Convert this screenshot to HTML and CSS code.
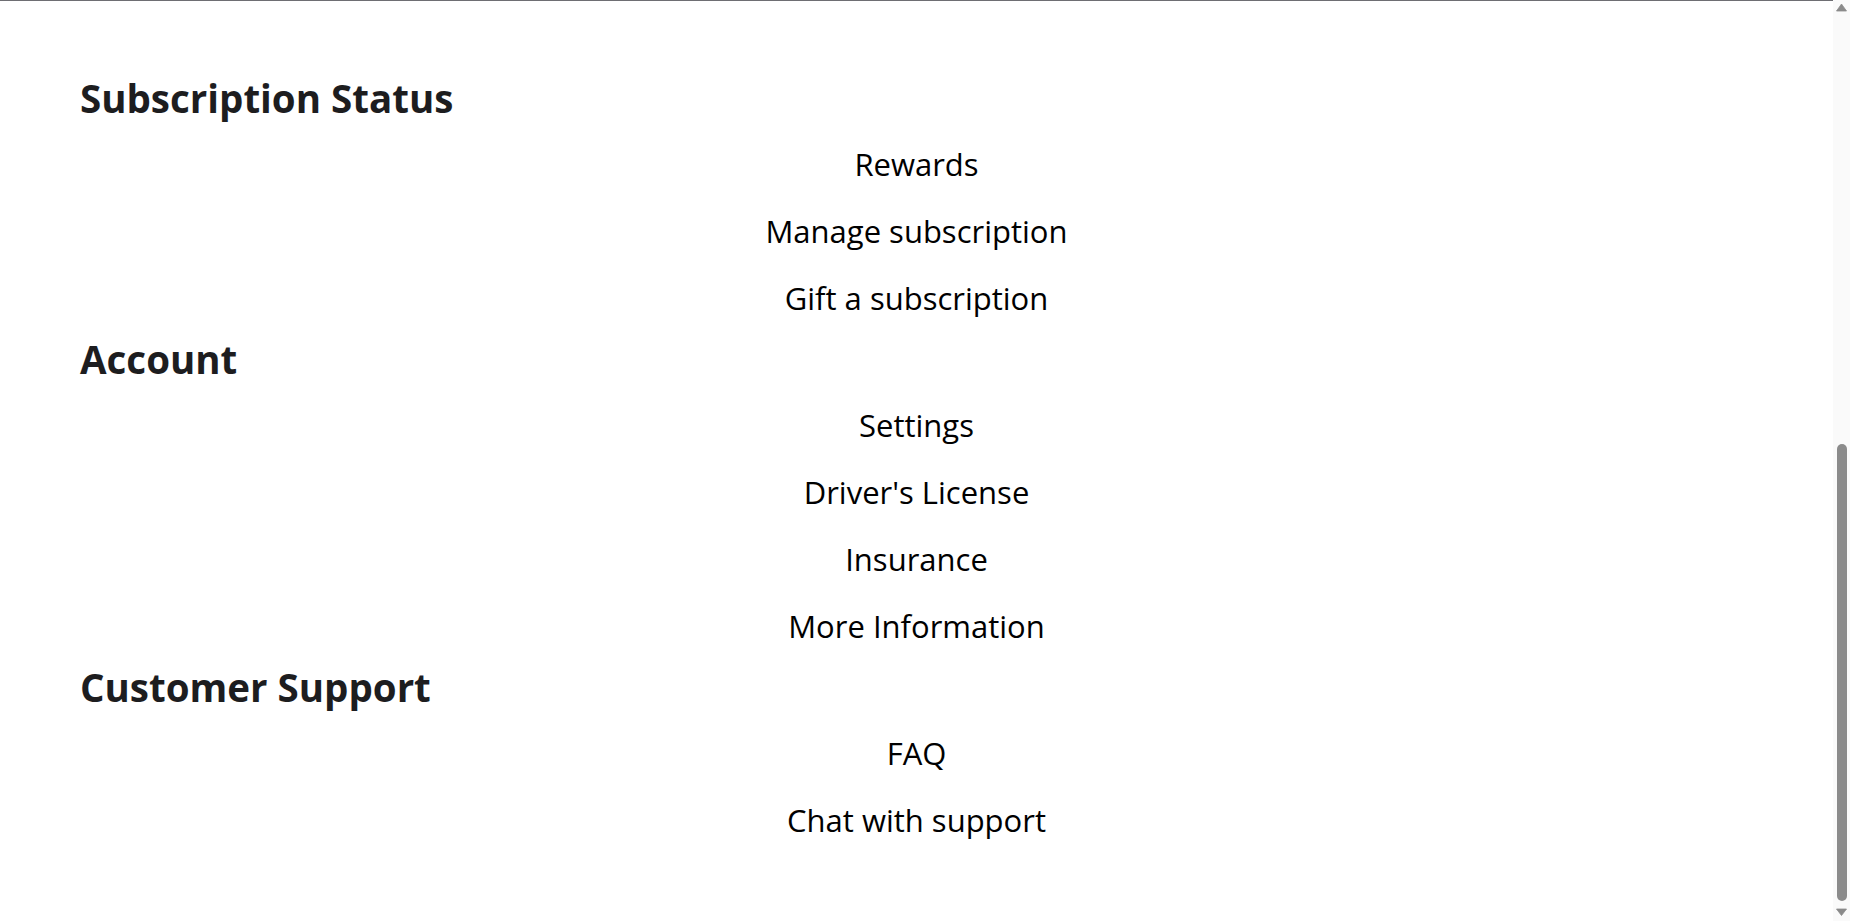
FILE: index.html
```html
<!DOCTYPE html>
<html lang="en">
<head>
<meta charset="utf-8">
<title>Profile</title>
<link rel="stylesheet" href="styles.css">
</head>
<body>
<div class="app">
  <div class="scroller">
    <div class="page">
      <header class="profile-top"></header>
      <main class="menu">
        <section class="group">
          <h2 class="group-title">Subscription Status</h2>
          <ul class="links">
            <li><a class="link" href="#">Rewards</a></li>
            <li><a class="link" href="#">Manage subscription</a></li>
            <li><a class="link" href="#">Gift a subscription</a></li>
          </ul>
        </section>
        <section class="group">
          <h2 class="group-title">Account</h2>
          <ul class="links">
            <li><a class="link" href="#">Settings</a></li>
            <li><a class="link" href="#">Driver's License</a></li>
            <li><a class="link" href="#">Insurance</a></li>
            <li><a class="link" href="#">More Information</a></li>
          </ul>
        </section>
        <section class="group">
          <h2 class="group-title">Customer Support</h2>
          <ul class="links">
            <li><a class="link" href="#">FAQ</a></li>
            <li><a class="link" href="#">Chat with support</a></li>
          </ul>
        </section>
      </main>
    </div>
  </div>
  <div class="scrollbar" aria-hidden="true">
    <div class="sb-btn">
      <svg width="17" height="17" viewBox="0 0 17 17"><polygon points="8.5,4 13.5,11 3.5,11" fill="#8a8a8a" stroke="#8a8a8a" stroke-width="0.8" stroke-linejoin="round"/></svg>
    </div>
    <div class="sb-track">
      <div class="sb-thumb"></div>
    </div>
    <div class="sb-btn">
      <svg width="17" height="17" viewBox="0 0 17 17"><polygon points="3.5,5 13.5,5 8.5,11.5" fill="#8a8a8a" stroke="#8a8a8a" stroke-width="0.8" stroke-linejoin="round"/></svg>
    </div>
  </div>
</div>
</body>
</html>
```

FILE: styles.css
```css
html, body {
  margin: 0;
  padding: 0;
  height: 100%;
  background: #ffffff;
  overflow: hidden;
}

body {
  font-family: "Open Sans", "Noto Sans", "Liberation Sans", sans-serif;
  color: #000000;
}

.app {
  display: flex;
  height: 100vh;
}

.scroller {
  flex: 1;
  min-width: 0;
  height: 100vh;
  overflow: hidden;
  display: flex;
  flex-direction: column-reverse;
}

.page {
  flex-shrink: 0;
}

.profile-top {
  height: 888px;
  border-bottom: 1px solid #6e6e73;
}

.menu {
  height: 920px;
  box-sizing: border-box;
  padding: 70px 0 0 0;
}

.group-title {
  margin: 0 0 6px 0;
  padding-left: 80px;
  font-size: 38.5px;
  line-height: 54px;
  font-weight: 700;
  color: #1d1d1f;
}

.links {
  list-style: none;
  margin: 0;
  padding: 0;
}

.links li {
  text-align: center;
  line-height: 67px;
  font-size: 31px;
}

.link {
  color: #000000;
  text-decoration: none;
}

/* window scrollbar */
.scrollbar {
  width: 17px;
  flex-shrink: 0;
  background: #fafafa;
  display: flex;
  flex-direction: column;
}

.sb-btn {
  height: 17px;
  flex-shrink: 0;
}

.sb-btn svg {
  display: block;
}

.sb-track {
  flex: 1;
  display: flex;
  flex-direction: column;
  justify-content: flex-end;
  align-items: center;
  padding-bottom: 3px;
}

.sb-thumb {
  width: 10px;
  height: 457px;
  margin-left: 1px;
  background: #8b8b8b;
  border-radius: 5px;
}
```
